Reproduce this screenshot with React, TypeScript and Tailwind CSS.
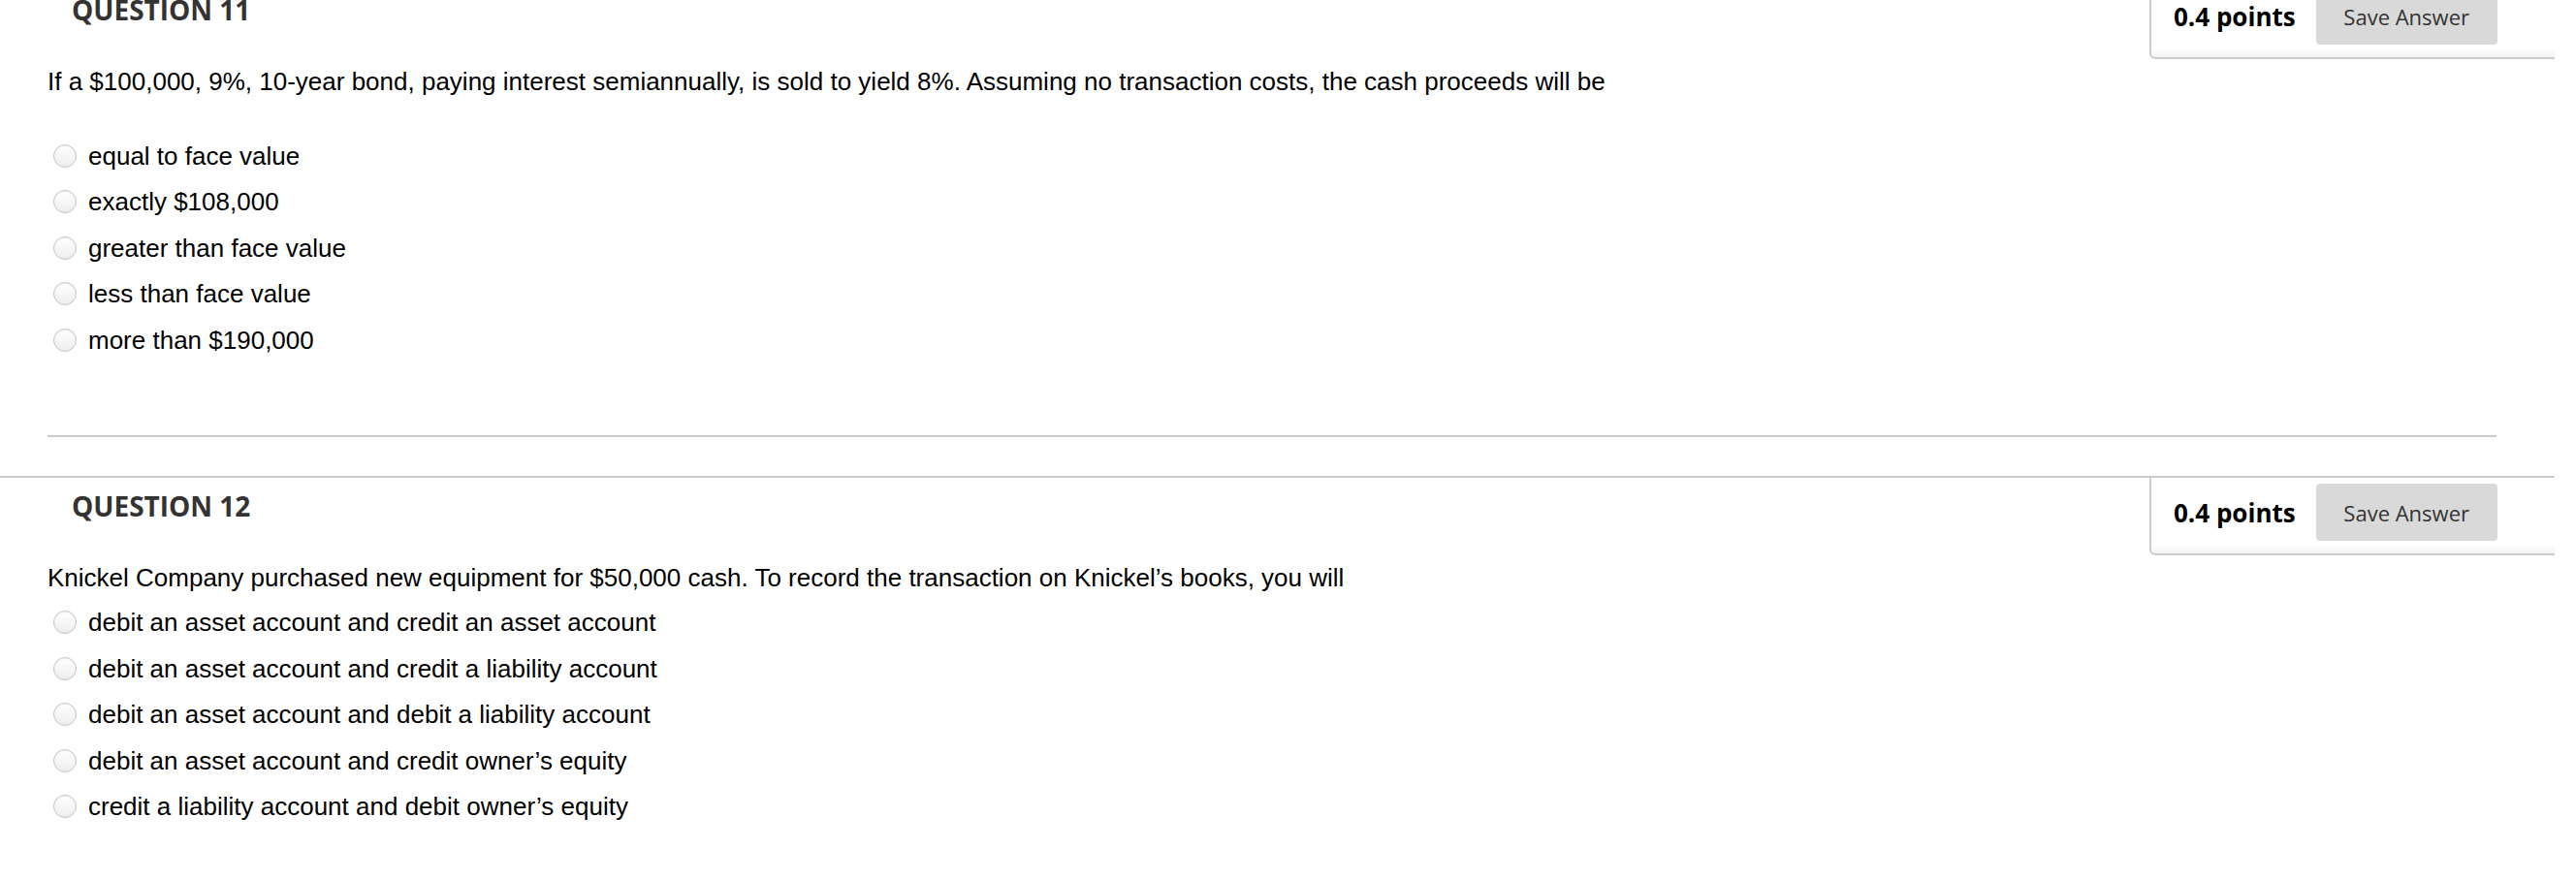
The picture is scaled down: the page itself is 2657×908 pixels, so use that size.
import React from "react";

type Q = {
  num: number;
  text: string;
  options: string[];
  textToOptions: string;
};

const questions: Q[] = [
  {
    num: 11,
    text:
      "If a $100,000, 9%, 10-year bond, paying interest semiannually, is sold to yield 8%. Assuming no transaction costs, the cash proceeds will be",
    options: [
      "equal to face value",
      "exactly $108,000",
      "greater than face value",
      "less than face value",
      "more than $190,000",
    ],
    textToOptions: "mt-[38px]",
  },
  {
    num: 12,
    text:
      "Knickel Company purchased new equipment for $50,000 cash. To record the transaction on Knickel\u2019s books, you will",
    options: [
      "debit an asset account and credit an asset account",
      "debit an asset account and credit a liability account",
      "debit an asset account and debit a liability account",
      "debit an asset account and credit owner\u2019s equity",
      "credit a liability account and debit owner\u2019s equity",
    ],
    textToOptions: "mt-[7.5px]",
  },
];

function Radio() {
  return (
    <span className="block w-[24px] h-[24px] shrink-0 rounded-full border border-[#c4c4c4] bg-[linear-gradient(to_bottom,#ffffff,#ededed)] shadow-[inset_0_1px_1px_rgba(0,0,0,0.06)]" />
  );
}

function PointsBox() {
  return (
    <div className="w-[418px] h-[80px] shrink-0 border-l-2 border-b-2 border-[#cccccc] rounded-bl-[6px] bg-[linear-gradient(to_bottom,#ffffff_88%,#f3f3f3)] flex items-start pl-[23px] pr-[60px] pt-[6px]">
      <div className="flex items-center h-[59px] gap-[21px]">
        <span className="font-['Open_Sans',sans-serif] font-bold text-[26px] leading-none text-black whitespace-nowrap">
          0.4 points
        </span>
        <button className="w-[187px] h-[59px] rounded-[4px] bg-[#d9d9d9] font-['Open_Sans',sans-serif] text-[22px] text-[#333333] leading-none">
          Save Answer
        </button>
      </div>
    </div>
  );
}

function Question({ q, first }: { q: Q; first: boolean }) {
  return (
    <section className={`border-t-2 border-[#cccccc] ${first ? "mt-[-21px]" : ""}`}>
      <div className="flex items-start justify-between">
        <h2 className="pl-[74px] pt-[10px] font-['Open_Sans',sans-serif] font-bold text-[28px] leading-[38px] text-[#333333]">
          QUESTION {q.num}
        </h2>
        <PointsBox />
      </div>
      <div className="pl-[49px] pr-[60px]">
        <p className="mt-[8px] font-['Liberation_Sans',Arial,sans-serif] text-[26px] leading-[30px] text-black">
          {q.text}
        </p>
        <ul className={q.textToOptions}>
          {q.options.map((o) => (
            <li key={o} className="h-[47.5px] flex items-center">
              <span className="ml-[6px]">
                <Radio />
              </span>
              <span className="ml-[12px] font-['Liberation_Sans',Arial,sans-serif] text-[26px] leading-[30px] text-black whitespace-nowrap">
                {o}
              </span>
            </li>
          ))}
        </ul>
        {first && <div className="mt-[74.5px] mb-[40px] h-[2px] bg-[#cccccc]" />}
      </div>
    </section>
  );
}

export default function App() {
  return (
    <div className="w-[2657px] h-[908px] overflow-hidden bg-white">
      <div className="w-[2635px]">
        {questions.map((q, i) => (
          <Question key={q.num} q={q} first={i === 0} />
        ))}
      </div>
    </div>
  );
}
